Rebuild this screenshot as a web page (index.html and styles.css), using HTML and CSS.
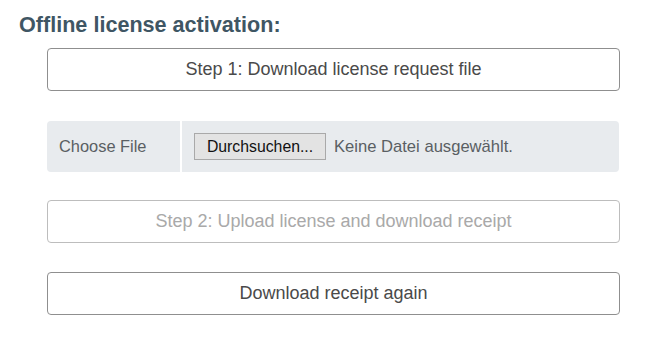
FILE: index.html
```html
<!DOCTYPE html>
<html>
<head>
<meta charset="utf-8">
<link rel="stylesheet" href="styles.css">
</head>
<body>
<div class="page">
  <h2 class="title">Offline license activation:</h2>
  <div class="steps">
    <button class="btn">Step 1: Download license request file</button>
    <div class="file-row">
      <div class="file-label">Choose File</div>
      <div class="file-input">
        <span class="browse">Durchsuchen...</span>
        <span class="no-file">Keine Datei ausgewählt.</span>
      </div>
    </div>
    <button class="btn disabled" disabled>Step 2: Upload license and download receipt</button>
    <button class="btn">Download receipt again</button>
  </div>
</div>
</body>
</html>
```
FILE: styles.css
```css
html, body {
  margin: 0;
  padding: 0;
  background: #ffffff;
  font-family: "Liberation Sans", Arial, sans-serif;
}
.page {
  padding: 12px 36px 0 19px;
}
.title {
  margin: 0;
  font-size: 21.6px;
  font-weight: bold;
  color: #3f5664;
  line-height: 26px;
}
.steps {
  margin-left: 28px;
  margin-top: 10px;
  display: flex;
  flex-direction: column;
  gap: 29px;
}
.btn {
  display: block;
  width: 573px;
  height: 43px;
  border: 1px solid #8f8f8f;
  border-radius: 4px;
  background: #ffffff;
  font-family: "Liberation Sans", Arial, sans-serif;
  font-size: 18px;
  color: #4a4a4a;
  padding: 0;
  text-align: center;
}
.btn.disabled {
  border-color: #bdbdbd;
  color: #a9a9a9;
}
.file-row {
  display: flex;
  width: 572px;
  height: 51px;
  border-radius: 4px;
  overflow: hidden;
  gap: 2px;
  margin-top: 1px;
  margin-bottom: -1px;
}
.file-label {
  width: 133px;
  background: #e8ebee;
  display: flex;
  align-items: center;
  padding-left: 12px;
  box-sizing: border-box;
  font-size: 16.4px;
  color: #5a5f63;
}
.file-input {
  flex: 1;
  background: #e8ebee;
  display: flex;
  align-items: center;
  padding-left: 12px;
  color: #5a5f63;
}
.browse {
  display: inline-block;
  box-sizing: border-box;
  width: 132px;
  height: 27px;
  line-height: 25px;
  text-align: center;
  background: #e3e3e3;
  border: 1px solid #a9a9a9;
  color: #111;
  font-size: 15.8px;
  margin-right: 8px;
}
.no-file {
  font-size: 16.6px;
}
```
